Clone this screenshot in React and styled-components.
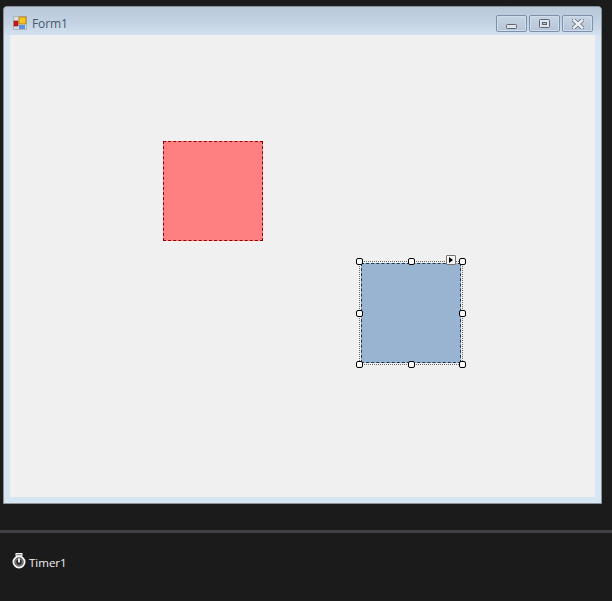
import React from "react";
import styled, { createGlobalStyle } from "styled-components";

const Global = createGlobalStyle`
  html, body { margin: 0; padding: 0; background: #1b1b1b; }
  body { width: 612px; height: 601px; overflow: hidden; font-family: "Open Sans", "Liberation Sans", sans-serif; }
`;

const Page = styled.div`
  width: 612px;
  height: 601px;
  display: flex;
  flex-direction: column;
  background: #1b1b1b;
`;

const DesignSurface = styled.div`
  height: 530px;
  box-sizing: border-box;
  padding: 6px 10px 0 3px;
`;

const FormWindow = styled.div`
  width: 599px;
  height: 498px;
  box-sizing: border-box;
  display: flex;
  flex-direction: column;
  border: 1px solid #8e9298;
  border-radius: 4px 4px 0 0;
  background: #d8e5f3;
  padding: 0 6px 6px;
`;

const TitleBar = styled.div`
  height: 28px;
  margin: 0 -6px;
  padding: 0 8px 0 9px;
  flex: none;
  display: flex;
  align-items: center;
  background: linear-gradient(#b8c8d8, #c4d3e3 55%, #d2e0ef);
  border-radius: 3px 3px 0 0;
`;

const TitleIcon = styled.svg`
  width: 14px;
  height: 14px;
  flex: none;
  margin-top: 4px;
`;

const Title = styled.span`
  margin-left: 5px;
  margin-top: 5px;
  font-size: 12px;
  letter-spacing: -0.1px;
  color: #44586e;
`;

const CaptionButtons = styled.div`
  margin-left: auto;
  display: flex;
  gap: 2px;
  margin-top: 5px;
`;

const CaptionButton = styled.div`
  width: 31px;
  height: 17px;
  box-sizing: border-box;
  border: 1px solid #7f90ab;
  border-radius: 2px;
  background: linear-gradient(#c6d4e3, #b6c6d8);
  box-shadow: inset 0 0 0 1px #d0dcea;
  display: flex;
  align-items: center;
  justify-content: center;
`;

const MinimizeGlyph = styled.svg`
  margin-top: 5px;
`;

const Client = styled.div`
  position: relative;
  flex: 1;
  background: #f0f0f0;
`;

const RedPanel = styled.div`
  position: absolute;
  left: 153px;
  top: 106px;
  width: 100px;
  height: 100px;
  box-sizing: border-box;
  background: #ff8080;
  border: 1px dashed #900000;
`;

const Selection = styled.div`
  position: absolute;
  left: 349px;
  top: 226px;
  width: 104px;
  height: 104px;
  box-sizing: border-box;
  border: 1px dotted #6a6a6a;
  padding: 1px;
`;

const BluePanel = styled.div`
  width: 100px;
  height: 100px;
  box-sizing: border-box;
  background: #99b4d1;
  border: 1px dashed #1f3550;
`;

const Handle = styled.div`
  position: absolute;
  left: ${(p) => p.$x}px;
  top: ${(p) => p.$y}px;
  width: 7px;
  height: 7px;
  box-sizing: border-box;
  background: #fff;
  border: 1px solid #000;
  border-radius: 2px;
`;

const SmartTag = styled.div`
  position: absolute;
  left: 86px;
  top: -7px;
  width: 10px;
  height: 10px;
  box-sizing: border-box;
  background: #f5f5f5;
  border: 1px solid #77736a;
  border-radius: 1px;
  display: flex;
  align-items: center;
  justify-content: center;
`;

const TagArrow = styled.div`
  width: 0;
  height: 0;
  border-left: 4px solid #000;
  border-top: 3px solid transparent;
  border-bottom: 3px solid transparent;
`;

const Splitter = styled.div`
  height: 3px;
  flex: none;
  background: #3f3f46;
`;

const Tray = styled.div`
  flex: 1;
  display: flex;
  align-items: flex-start;
  padding: 20px 0 0 12px;
`;

const TimerIcon = styled.svg`
  width: 14px;
  height: 16px;
  flex: none;
`;

const TrayLabel = styled.span`
  margin-left: 3px;
  margin-top: 2px;
  font-size: 11.5px;
  line-height: 16px;
  color: #f1f1f1;
`;

const handles = [
  [-4, -4], [48, -4], [99, -4],
  [-4, 48], [99, 48],
  [-4, 99], [48, 99], [99, 99],
];

export default function App() {
  return (
    <Page>
      <Global />
      <DesignSurface>
        <FormWindow>
          <TitleBar>
            <TitleIcon viewBox="0 0 14 14">
              <rect x="0.5" y="0.5" width="13" height="13" fill="#d8dde2" stroke="#b0b6bc" />
              <rect x="1" y="5" width="4" height="5" fill="#d01818" stroke="#801010" strokeWidth="0.6" />
              <rect x="6" y="1" width="7" height="7" fill="#f7c51e" stroke="#a87810" strokeWidth="0.8" />
              <rect x="6" y="9" width="6" height="4" fill="#5a92e0" />
            </TitleIcon>
            <Title>Form1</Title>
            <CaptionButtons>
              <CaptionButton>
                <MinimizeGlyph width="11" height="5" viewBox="0 0 11 5">
                  <rect x="0.5" y="0.5" width="10" height="4" rx="1" fill="#e4e4e4" stroke="#56657a" />
                </MinimizeGlyph>
              </CaptionButton>
              <CaptionButton>
                <svg width="11" height="9" viewBox="0 0 11 9">
                  <rect x="0.5" y="0.5" width="10" height="8" rx="1" fill="#e4e4e4" stroke="#56657a" />
                  <rect x="3.5" y="3.5" width="4" height="2" fill="#b6c6d8" stroke="#56657a" />
                </svg>
              </CaptionButton>
              <CaptionButton>
                <svg width="12" height="10" viewBox="0 0 12 10">
                  <path d="M2 1.5 L10 8.5 M10 1.5 L2 8.5" stroke="#66727f" strokeWidth="4.2" strokeLinecap="square" />
                  <path d="M2 1.5 L10 8.5 M10 1.5 L2 8.5" stroke="#eceff2" strokeWidth="2.6" strokeLinecap="square" />
                </svg>
              </CaptionButton>
            </CaptionButtons>
          </TitleBar>
          <Client>
            <RedPanel />
            <Selection>
              <BluePanel />
              {handles.map(([x, y]) => (
                <Handle key={`${x}-${y}`} $x={x} $y={y} />
              ))}
              <SmartTag>
                <TagArrow />
              </SmartTag>
            </Selection>
          </Client>
        </FormWindow>
      </DesignSurface>
      <Splitter />
      <Tray>
        <TimerIcon viewBox="0 0 14 16">
          <rect x="4" y="0.5" width="6" height="2.5" fill="#888" stroke="#f4f4f4" />
          <circle cx="7" cy="9" r="5.6" fill="#555" stroke="#f8f8f8" strokeWidth="1.8" />
          <circle cx="7" cy="9" r="3.4" fill="#2a2a2a" stroke="#9a9a9a" strokeWidth="0.8" />
          <path d="M7 5.5 V9.5" stroke="#fff" strokeWidth="1.8" />
        </TimerIcon>
        <TrayLabel>Timer1</TrayLabel>
      </Tray>
    </Page>
  );
}
